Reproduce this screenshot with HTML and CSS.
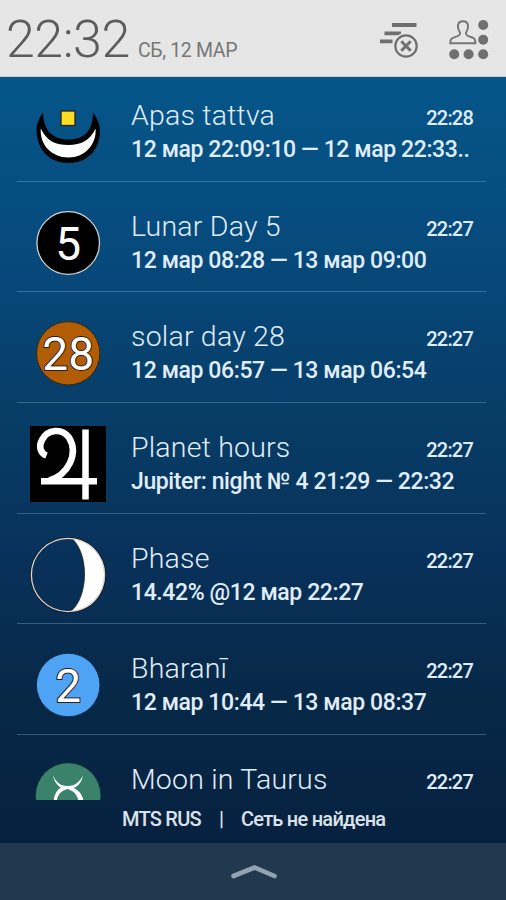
FILE: index.html
```html
<!DOCTYPE html>
<html lang="ru">
<head>
<meta charset="utf-8">
<title>Уведомления</title>
<link rel="stylesheet" href="styles.css">
</head>
<body>
<div class="screen">
  <header class="header">
    <div class="clock">22:32</div>
    <div class="date">СБ, 12 МАР</div>
    <svg class="clear-icon" width="40" height="40" viewBox="0 0 40 40">
      <g stroke="#6f6f6f" stroke-width="3.8" stroke-linecap="butt">
        <path d="M13 6H37.500M5.500 14.300H22M1 22.300H13.500"/>
      </g>
      <circle cx="27" cy="27" r="13.300" fill="#e6e6e6"/>
      <circle cx="27" cy="27" r="10.700" fill="none" stroke="#6f6f6f" stroke-width="2.200"/>
      <path d="M22.300 22.300l9.400 9.400M31.700 22.300l-9.400 9.400" stroke="#6f6f6f" stroke-width="3"/>
    </svg>
    <svg class="settings-icon" width="42" height="42" viewBox="0 0 42 42">
      <g fill="#6f6f6f"><circle cx="35.200" cy="6" r="5"/><circle cx="35.200" cy="20.800" r="5"/><circle cx="35.200" cy="35.300" r="5"/><circle cx="20.600" cy="35.300" r="5"/><circle cx="6.200" cy="35.300" r="5"/></g>
      <path d="M2.200 24.200C2.200 18.500 5.500 18.600 9.500 17.200C12.600 16 12.600 14 11.200 12C9.300 9 8.700 2.300 15 2.300S20.700 9 18.800 12C17.400 14 17.400 16 20.500 17.200C24.500 18.600 27.500 18.500 27.500 24.200Z" fill="none" stroke="#757575" stroke-width="1.900" stroke-linejoin="round"/>
    </svg>
  </header>
  <main class="list">
    <section class="row">
      <svg class="icon" viewBox="0 0 76 76">
        <path d="M13 18.500C9 24 6.500 30 6.500 37C7 56 20 69 38.500 69S70 56 70 37C70 30 67 24 63 18.500C63 37 54 45.500 38.500 45.500S13.500 37 13 18.500Z" fill="#000"/>
        <path d="M10.800 34.500C17 47.500 26 51 38.500 51S60 46.500 65.500 34.500C67 50 55 63.500 38.500 63.500S9.500 51 10.800 34.500Z" fill="#fff"/>
        <rect x="31" y="17" width="14" height="14.500" fill="#ffdc24" stroke="#222" stroke-width="1.300"/>
      </svg>
      <div class="title">Apas tattva</div><div class="time">22:28</div><div class="detail">12 мар 22:09:10 — 12 мар 22:33..</div>
    </section>
    <section class="row">
      <svg class="icon" viewBox="0 0 76 76"><circle cx="38.200" cy="38" r="31.300" fill="#000" stroke="#d0d0d0" stroke-width="1.300"/><text x="38.200" y="54.500" class="number">5</text></svg>
      <div class="title">Lunar Day 5</div><div class="time">22:27</div><div class="detail">12 мар 08:28 — 13 мар 09:00</div>
    </section>
    <section class="row">
      <svg class="icon" viewBox="0 0 76 76"><circle cx="38.200" cy="38.300" r="31.700" fill="#b35c06" stroke="#322616"/><text x="38.200" y="54.500" class="number outlined">28</text></svg>
      <div class="title">solar day 28</div><div class="time">22:27</div><div class="detail">12 мар 06:57 — 13 мар 06:54</div>
    </section>
    <section class="row">
      <svg class="icon" viewBox="0 0 76 76"><path fill="#000" d="M0 0h76v76H0z"/><g fill="none" stroke="#fff" stroke-width="6.500"><path d="M16.500 29.500C10 27 8.500 20 12 14C17.500 3 32 2 39 11.500C49 28 38 49 19 54.500"/><path d="M11 55.300H67M55.500 3.500V73.500"/></g></svg>
      <div class="title">Planet hours</div><div class="time">22:27</div><div class="detail">Jupiter: night № 4 21:29 — 22:32</div>
    </section>
    <section class="row">
      <svg class="icon" viewBox="0 0 76 76"><circle cx="38" cy="38" r="37" fill="none" stroke="#161616" stroke-width="2"/><path d="M42 1.500C84 5 86 67 46 74.500L40 75C58 62 60 18 42 1.500Z" fill="#fff" stroke="#161616" stroke-width=".7"/><circle cx="38" cy="38" r="36.600" fill="none" stroke="#ddd5d1" stroke-width="1.300"/></svg>
      <div class="title">Phase</div><div class="time">22:27</div><div class="detail">14.42% @12 мар 22:27</div>
    </section>
    <section class="row">
      <svg class="icon" viewBox="0 0 76 76"><circle cx="38.200" cy="38" r="31.800" fill="#4fa3f5" stroke="#102b48"/><text x="38.200" y="54.500" class="number outlined">2</text></svg>
      <div class="title">Bharanī</div><div class="time">22:27</div><div class="detail">12 мар 10:44 — 13 мар 08:37</div>
    </section>
    <section class="row">
      <svg class="icon" viewBox="0 0 76 76"><circle cx="38.200" cy="37.500" r="32.800" fill="#3b826b" stroke="#142c38"/><g fill="#fff"><path d="M23 17.500C27 26 32 28 38 28C44 28 49 25 53 17.500C51 26 47 30 40 30.500C31 32 26.500 37 26.500 46H23.500C23.500 38 26.500 32 31 29.500C27 27.500 24 23 23 17.500Z"/><path d="M35 28C47 29 53 35 54 46H49C48 37 44 32 35 30.500Z"/></g></svg>
      <div class="title">Moon in Taurus</div><div class="time">22:27</div>
    </section>
  </main>
  <div class="carrier"><span class="operator">MTS RUS</span><span class="bar">|</span><span class="network">Сеть не найдена</span></div>
  <footer class="handle"><svg width="48" height="18" viewBox="0 0 48 18"><path d="M3.500 13L24.500 4.500L44.500 13" fill="none" stroke="#94a3b0" stroke-width="4.600" stroke-linecap="round" stroke-linejoin="miter"/></svg></footer>
</div>
</body>
</html>
```
FILE: styles.css
```css
* { box-sizing: border-box; }
body { margin: 0; font-family: Roboto, "Liberation Sans", sans-serif; }
.screen {
  width: 506px; height: 900px; overflow: hidden;
  display: flex; flex-direction: column;
  background: linear-gradient(to bottom, #05568a 77px, #07487a 270px, #073c65 430px, #08315a 560px, #072847 700px, #06213f 843px);
}
.header {
  height: 77px; flex: none; display: flex; align-items: flex-start;
  background: #e6e6e6; border-bottom: 1px solid #c5d0da; color: #5c5c5c; white-space: nowrap;
}
.clock { width: 129px; margin-left: 6px; padding-top: 9px; font-size: 52px; line-height: 62px; font-weight: 300; letter-spacing: -.5px; }
.date { width: 244px; padding: 39px 0 0 3px; font-size: 19.5px; line-height: 24px; font-weight: 400; letter-spacing: -.35px; color: #777; }
.clear-icon { margin: 19px 0 0 0; flex: none; }
.settings-icon { margin: 19px 0 0 29px; flex: none; }
.list { height: 723px; flex: none; overflow: hidden; padding: 0 20px 0 17px; }
.row {
  height: 110.67px; padding: 26px 13px 0; display: grid;
  grid-template-columns: 101px 1fr auto; grid-template-rows: 36px 32px;
  align-content: start; border-bottom: 1px solid rgba(145,178,213,.36);
  color: #e0edfa; white-space: nowrap;
}
.row:first-child { height: 104.67px; padding-top: 20px; }
.icon { width: 76px; height: 76px; grid-row: 1 / 3; margin-top: -3px; }
.title { font-size: 28.5px; line-height: 38px; font-weight: 300; letter-spacing: .2px; }
.time { font-size: 20px; line-height: 43px; font-weight: 500; letter-spacing: -.8px; }
.detail { grid-column: 2 / 4; padding-top: 1px; font-size: 23px; line-height: 32px; font-weight: 500; letter-spacing: -.4px; }
.number { font-size: 46px; font-weight: 400; text-anchor: middle; fill: #fff; }
.outlined { stroke: #292019; stroke-width: 2px; paint-order: stroke; }
.carrier { height: 43px; flex: none; padding-left: 122px; display: flex; color: #dce2e9; font-size: 20px; line-height: 38px; font-weight: 500; letter-spacing: -.75px; white-space: nowrap; }
.operator { width: 97px; }
.bar { width: 22px; }
.handle { flex: 1; display: flex; align-items: center; justify-content: center; padding: 1px 0 0 2px; background: #22384e; }
```
